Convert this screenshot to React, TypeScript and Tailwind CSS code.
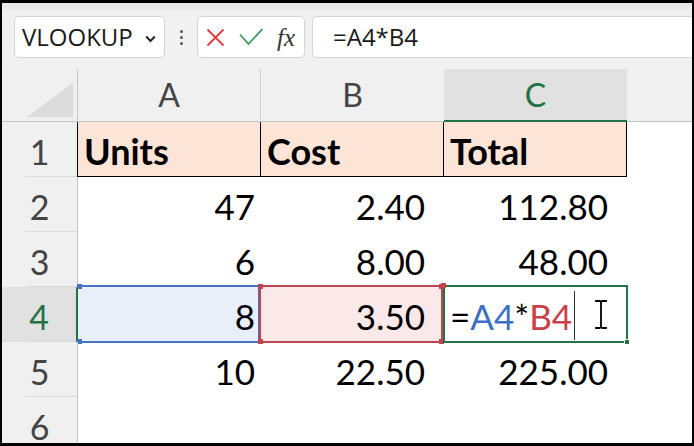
import React from "react";

const GRID = "[font-family:Lato,'Carlito',sans-serif]";
const UI = "[font-family:'Open_Sans','Noto_Sans',sans-serif]";

function RowHead({ n, selected, black }: { n: number; selected?: boolean; black?: boolean }) {
  return (
    <div
      className={`relative w-[76px] h-[55px] shrink-0 flex items-end justify-center pb-[8px] text-[34px] leading-none ${GRID} ${
        selected
          ? "bg-[#e1e1e1] text-[#217346] border-r-2 border-[#217346]"
          : black
          ? "bg-[#f0f0f0] text-[#444] border-r border-black"
          : "bg-[#f0f0f0] text-[#444] border-r border-[#c6c6c6]"
      }`}
    >
      {n}
      <span className="absolute bottom-0 left-[23px] right-0 h-px bg-[#dadada]" />
    </div>
  );
}

function NumCell({ v, pr }: { v: string; pr: string }) {
  return (
    <div className={`w-[183px] h-[55px] shrink-0 flex items-end justify-end pb-[8px] ${pr} text-[35px] leading-none text-black ${GRID}`}>
      {v}
    </div>
  );
}

function Handle({ cls }: { cls: string }) {
  return <span className={`absolute w-[5px] h-[5px] ${cls}`} />;
}

export default function App() {
  const rows: [string, string, string][] = [
    ["47", "2.40", "112.80"],
    ["6", "8.00", "48.00"],
  ];
  return (
    <div className="w-[694px] h-[446px] bg-black pl-[2px] pt-[3px] overflow-hidden">
      <div className="w-[690px] h-[440px] bg-white flex flex-col overflow-hidden">
        {/* toolbar */}
        <div className={`h-[66px] shrink-0 bg-[linear-gradient(to_bottom,#e6e6e6,#f1f1f1_10px,#f1f1f1)] flex items-start pt-[13px] pl-[12px] ${UI}`}>
          <div className="w-[151px] h-[42px] bg-white border border-[#d4d4d4] rounded-[5px] flex items-center pl-[7px] pr-[8px] text-[24px] text-[#1a1a1a]">
            <span className="flex-1 leading-none">VLOOKUP</span>
            <svg width="11" height="8" viewBox="0 0 11 8" className="mt-[4px]">
              <path d="M1.2 1.5 L5.5 6 L9.8 1.5" fill="none" stroke="#222" strokeWidth="2" />
            </svg>
          </div>
          <div className="w-[32px] h-[42px] flex flex-col items-center justify-center gap-[3px]">
            <span className="w-[3px] h-[3px] rounded-full bg-[#555]" />
            <span className="w-[3px] h-[3px] rounded-full bg-[#555]" />
            <span className="w-[3px] h-[3px] rounded-full bg-[#555]" />
          </div>
          <div className="w-[108px] h-[42px] bg-white border border-[#d4d4d4] rounded-[5px] flex items-center pl-[8px]">
            <svg width="19" height="19" viewBox="0 0 19 19">
              <path d="M1.5 1.5 L17.5 17.5 M17.5 1.5 L1.5 17.5" stroke="#e2373d" strokeWidth="1.8" fill="none" />
            </svg>
            <svg width="25" height="18" viewBox="0 0 25 18" className="ml-[14px]">
              <path d="M1 6.5 L9.5 16 L23.5 1" stroke="#3b9a5c" strokeWidth="1.8" fill="none" />
            </svg>
            <span className="ml-[13px] text-[25px] leading-none italic text-[#333] [font-family:'Liberation_Serif','DejaVu_Serif',serif]">fx</span>
          </div>
          <div className="ml-[7px] flex-1 h-[42px] bg-white border border-r-0 border-[#d4d4d4] rounded-l-[5px] flex items-center pl-[20px] text-[24px] text-[#1a1a1a] leading-none">
            =A4*B4
          </div>
        </div>

        {/* column headers */}
        <div className={`h-[53px] shrink-0 flex bg-[#f0f0f0] ${GRID}`}>
          <div className="relative w-[76px] h-full shrink-0 border-r border-b border-[#c6c6c6]">
            <svg className="absolute left-0 top-0" width="75" height="52" viewBox="0 0 75 52">
              <polygon points="71,14 71,48 25,48" fill="#dcdcdc" />
            </svg>
          </div>
          <div className="w-[183px] h-full shrink-0 border-r border-b border-r-[#d0d0d0] border-b-[#c6c6c6] flex items-end justify-center pb-[10px] text-[32px] leading-none text-[#444]">A</div>
          <div className="w-[183px] h-full shrink-0 border-b border-[#c6c6c6] flex items-end justify-center pb-[10px] text-[32px] leading-none text-[#444]">B</div>
          <div className="w-[183px] h-full shrink-0 bg-[#e1e1e1] border-b-2 border-[#217346] flex items-end justify-center pb-[9px] text-[32px] leading-none text-[#217346]">C</div>
          <div className="flex-1 h-full border-b border-[#c6c6c6]" />
        </div>

        {/* row 1 */}
        <div className="flex h-[55px] shrink-0">
          <RowHead n={1} black />
          {["Units", "Cost", "Total"].map((t) => (
            <div key={t} className={`w-[183px] h-[55px] shrink-0 bg-[#fce4d6] border-r border-b border-black flex items-end pl-[6px] pb-[7px] text-[36px] font-bold leading-none text-black ${GRID}`}>
              {t}
            </div>
          ))}
        </div>

        {rows.map((r, i) => (
          <div key={i} className="flex h-[55px] shrink-0">
            <RowHead n={i + 2} />
            <NumCell v={r[0]} pr="pr-[6px]" />
            <NumCell v={r[1]} pr="pr-[19px]" />
            <NumCell v={r[2]} pr="pr-[19px]" />
          </div>
        ))}

        {/* row 4 (editing) */}
        <div className="flex h-[55px] shrink-0">
          <RowHead n={4} selected />
          <div className="relative w-[183px] h-[55px] shrink-0">
            <div className="absolute left-0 right-[1px] -top-[2px] -bottom-[1px] bg-[#e9eff9] border-2 border-l-0 border-[#4472c4]">
              <Handle cls="-left-[1px] -top-[3px] bg-[#4472c4]" />
              <Handle cls="-left-[1px] -bottom-[3px] bg-[#4472c4]" />
            </div>
            <div className={`relative h-full flex items-end justify-end pr-[6px] pb-[8px] text-[35px] leading-none text-black ${GRID}`}>8</div>
          </div>
          <div className="relative w-[183px] h-[55px] shrink-0">
            <div className="absolute -left-[2px] right-[1px] -top-[2px] -bottom-[1px] bg-[#fbe9ea] border-2 border-[#c0434d]">
              <Handle cls="-left-[3px] -top-[3px] bg-[#c0434d]" />
              <Handle cls="-left-[3px] -bottom-[3px] bg-[#c0434d]" />
              <Handle cls="-right-[3px] -top-[3px] bg-[#c0434d]" />
              <Handle cls="-right-[3px] -bottom-[3px] bg-[#c0434d]" />
            </div>
            <div className={`relative h-full flex items-end justify-end pr-[19px] pb-[8px] text-[35px] leading-none text-black ${GRID}`}>3.50</div>
          </div>
          <div className="relative w-[183px] h-[55px] shrink-0">
            <div className="absolute -left-[1px] -right-[1px] -top-[2px] -bottom-[1px] border-2 border-[#217346]">
              <span className="absolute -right-[4px] -bottom-[4px] w-[6px] h-[6px] bg-[#217346] border border-white" />
            </div>
            <span className="absolute -left-[3px] -top-[4px] w-[5px] h-[5px] bg-[#c0434d]" />
            <div className={`relative h-full flex items-end pl-[6px] pb-[8px] text-[35px] leading-none text-black ${GRID}`}>
              <span>
                =<span className="text-[#3c6fc6]">A4</span>*<span className="text-[#c8404a]">B4</span>
              </span>
              <span className="self-stretch w-px bg-[#333] ml-[2px] mt-[4px] -mb-[6px]" />
            </div>
            <svg className="absolute left-[149px] top-[12px]" width="16" height="31" viewBox="0 0 16 31">
              <g fill="none" strokeLinecap="square">
                <path d="M3 2 H6.5 Q8 2 8 3.5 Q8 2 9.5 2 H13 M8 3.5 V27.5 M3 29 H6.5 Q8 29 8 27.5 Q8 29 9.5 29 H13" stroke="#fff" strokeWidth="3.5" />
                <path d="M3 2 H6.5 Q8 2 8 3.5 Q8 2 9.5 2 H13 M8 3.5 V27.5 M3 29 H6.5 Q8 29 8 27.5 Q8 29 9.5 29 H13" stroke="#000" strokeWidth="1.8" />
              </g>
            </svg>
          </div>
        </div>

        {/* row 5 */}
        <div className="flex h-[55px] shrink-0">
          <RowHead n={5} />
          <NumCell v="10" pr="pr-[6px]" />
          <NumCell v="22.50" pr="pr-[19px]" />
          <NumCell v="225.00" pr="pr-[19px]" />
        </div>

        {/* row 6 */}
        <div className="flex h-[55px] shrink-0">
          <RowHead n={6} />
        </div>
      </div>
    </div>
  );
}
